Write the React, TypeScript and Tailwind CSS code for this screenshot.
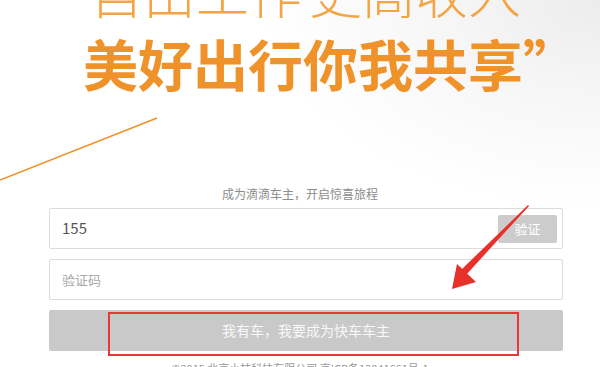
import React from "react";

const ORANGE = "#f0922a";

const App: React.FC = () => {
  return (
    <div className="relative h-[367px] w-[600px] overflow-hidden bg-white font-['Noto_Sans_CJK_SC','Noto_Sans',sans-serif]">
      {/* soft grey smudge in the corner */}
      <div className="pointer-events-none absolute inset-0 bg-[radial-gradient(ellipse_at_top_right,#ececec_0%,#f6f6f6_18%,transparent_40%)]" />

      {/* Headline */}
      <div className="relative mt-[-35px] whitespace-nowrap pl-[90px] text-[53px] font-light leading-[53px] text-[#f3a445]">
        <span>自由工作</span>
        <span className="ml-[7px]">更高收入</span>
      </div>
      <div className="relative mt-[17px] whitespace-nowrap pl-[83px] text-[55px] font-bold leading-[55px] text-[#f0922a]">
        美好出行你我共享”
      </div>

      {/* Form */}
      <p className="relative mt-[96px] text-center text-[12px] leading-[16px] text-[#8c8c8c]">
        成为滴滴车主，开启惊喜旅程
      </p>

      <div className="relative ml-[49px] mt-[6px] flex w-[514px] flex-col gap-[10px]">
        <div className="flex h-[41px] items-center justify-between rounded-[2px] border border-[#dcdcdc] bg-white pl-[12px] pr-[5px]">
          <span className="text-[15px] text-[#555]">155</span>
          <button className="flex h-[28px] w-[59px] items-center justify-center rounded-[2px] bg-[#cccccc] text-[13px] text-white">
            验证
          </button>
        </div>
        <div className="flex h-[41px] items-center rounded-[2px] border border-[#dcdcdc] bg-white pl-[12px]">
          <span className="text-[13px] text-[#a8a8a8]">验证码</span>
        </div>
        <button className="relative flex h-[41px] items-center justify-center rounded-[2px] bg-[#c9c9c9] text-[14px] text-[#f8f8f8]">
          我有车，我要成为快车车主
          {/* red annotation box */}
          <span className="absolute left-[59px] top-[2px] h-[44px] w-[411px] border-2 border-[#e53935]" />
        </button>
      </div>

      <p className="relative mt-[10px] text-center text-[11px] leading-[14px] text-[#999]">
        ©2015 北京小桔科技有限公司 京ICP备13041661号-1
      </p>

      {/* thin orange stroke */}
      <svg className="absolute left-0 top-0" width="600" height="367">
        <line x1="0" y1="180" x2="157" y2="118" stroke={ORANGE} strokeWidth="1.6" />
        {/* red arrow annotation */}
        <polygon points="528,205 529,206 466,275 461,270" fill="#e8302b" />
        <polygon points="452,289 457,264 476,282" fill="#e8302b" />
      </svg>
    </div>
  );
};

export default App;
